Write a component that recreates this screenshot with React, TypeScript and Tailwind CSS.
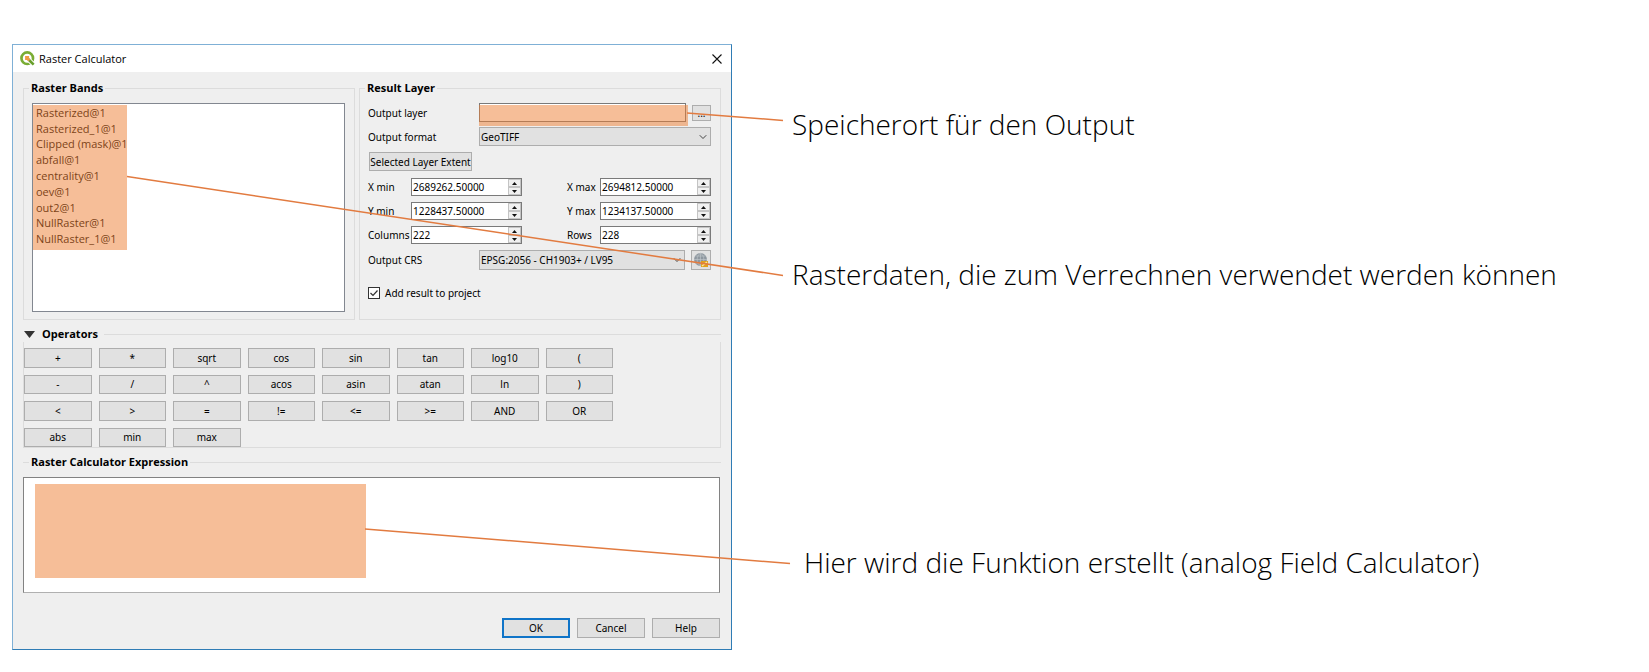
import { ChevronDown } from "lucide-react";
import type { ReactNode } from "react";

const bands = [
  "Rasterized@1",
  "Rasterized_1@1",
  "Clipped (mask)@1",
  "abfall@1",
  "centrality@1",
  "oev@1",
  "out2@1",
  "NullRaster@1",
  "NullRaster_1@1",
];

const operators = [
  "+", "*", "sqrt", "cos", "sin", "tan", "log10", "(",
  "-", "/", "^", "acos", "asin", "atan", "ln", ")",
  "<", ">", "=", "!=", "<=", ">=", "AND", "OR",
  "abs", "min", "max",
];

const buttonClass = "flex items-center justify-center border border-[#adadad] bg-[#e1e1e1] leading-none whitespace-nowrap";

function QgisLogo() {
  return (
    <svg viewBox="0 0 28 28" className="size-[15px]" aria-hidden="true">
      <circle cx="13.500" cy="13.500" r="10.800" fill="none" stroke="#7aad35" strokeWidth="5" />
      <path d="M17 17 L28 28" stroke="#ffffff" strokeWidth="8.500" />
      <path d="M15.500 15.500 L25.500 25.500" stroke="#68a02c" strokeWidth="5" />
      <path d="M9.500 9.500 H17 V13 L19 16 L16 19 L13 17 H9.500 Z" fill="#f09a45" />
    </svg>
  );
}

function GlobeIcon() {
  return (
    <svg viewBox="0 0 16 16" className="size-4" aria-hidden="true">
      <circle cx="7.500" cy="7.500" r="6.500" fill="#8e979f" />
      <path
        d="M1 7.500 H14 M7.500 1 V14 M2.500 4 H12.500 M2.500 11 H12.500 M7.500 1 C3 4 3 11 7.500 14 M7.500 1 C12 4 12 11 7.500 14"
        fill="none"
        stroke="#c5cacf"
        strokeWidth="0.600"
      />
      <rect x="8" y="9" width="7" height="6" fill="#e0a21c" />
      <path d="M9 14 L14 10" stroke="#fbe7a0" strokeWidth="1.500" />
    </svg>
  );
}

function Group({ title, className, children }: { title: string; className: string; children: ReactNode }) {
  return (
    <fieldset className={`min-w-0 border border-[#dcdcdc] ${className}`}>
      <legend className="ml-[5px] px-0.5 font-['Open_Sans',sans-serif] text-[11px] leading-4 font-bold">{title}</legend>
      <div className="pr-[9px] pl-2">{children}</div>
    </fieldset>
  );
}

function Spin({ id, label, value, labelClass }: { id: string; label: string; value: string; labelClass: string }) {
  return (
    <div className="flex items-center">
      <label htmlFor={id} className={labelClass}>{label}</label>
      <div className="flex h-[18px] w-[111px] border border-[#7a7a7a] bg-white">
        <input id={id} type="text" defaultValue={value} className="w-0 min-w-0 flex-1 pl-px outline-none" />
        <div className="flex w-[13px] flex-col">
          <button type="button" aria-label={`${label} +`} className="flex flex-1 items-center justify-center border border-[#c4c4c4] bg-[#f0f0f0]">
            <svg viewBox="0 0 5 3" className="h-[3px] w-[5px]"><path d="M0 3 L2.500 0 L5 3 Z" fill="#111" /></svg>
          </button>
          <button type="button" aria-label={`${label} -`} className="flex flex-1 items-center justify-center border border-[#c4c4c4] bg-[#f0f0f0]">
            <svg viewBox="0 0 5 3" className="h-[3px] w-[5px]"><path d="M0 0 L2.500 3 L5 0 Z" fill="#111" /></svg>
          </button>
        </div>
      </div>
    </div>
  );
}

function Dropdown({ id, value, className }: { id: string; value: string; className: string }) {
  return (
    <div className={`relative ${className}`}>
      <select id={id} className="size-full appearance-none border border-[#adadad] bg-[#e1e1e1] pl-px outline-none">
        <option>{value}</option>
      </select>
      <ChevronDown strokeWidth={2} className="pointer-events-none absolute top-1 right-0.5 size-3 text-[#444]" />
    </div>
  );
}

function ResultLayer() {
  return (
    <Group title="Result Layer" className="flex-1">
      <div className="mt-[7px] flex h-[19px] items-center">
        <label htmlFor="layer" className="w-[111px]">Output layer</label>
        <div className="relative h-[19px] flex-1">
          <input id="layer" type="text" className="size-full border border-[#7a7a7a] bg-white px-1 outline-none" />
          <div className="pointer-events-none absolute top-0.5 -right-0.5 -bottom-1 left-0 bg-[#ed7d31]/50" />
        </div>
        <button type="button" className="ml-1.5 flex h-4 w-[19px] items-center justify-center border border-[#adadad] bg-[#e1e1e1] leading-none">...</button>
      </div>
      <div className="mt-[5px] flex items-center">
        <label htmlFor="format" className="w-[111px]">Output format</label>
        <Dropdown id="format" value="GeoTIFF" className="h-[19px] flex-1" />
      </div>
      <button type="button" className={`${buttonClass} mt-[6px] ml-px h-[19px] w-[103px]`}>Selected Layer Extent</button>
      <div className="mt-[7px] flex justify-between">
        <div className="flex flex-col gap-1.5">
          <Spin id="xmin" label="X min" value="2689262.50000" labelClass="w-[43px]" />
          <Spin id="ymin" label="Y min" value="1228437.50000" labelClass="w-[43px]" />
          <Spin id="columns" label="Columns" value="222" labelClass="w-[43px]" />
        </div>
        <div className="flex flex-col gap-1.5">
          <Spin id="xmax" label="X max" value="2694812.50000" labelClass="w-[33px]" />
          <Spin id="ymax" label="Y max" value="1234137.50000" labelClass="w-[33px]" />
          <Spin id="rows" label="Rows" value="228" labelClass="w-[33px]" />
        </div>
      </div>
      <div className="mt-1.5 flex items-center">
        <label htmlFor="crs" className="w-[111px]">Output CRS</label>
        <Dropdown id="crs" value="EPSG:2056 - CH1903+ / LV95" className="h-5 flex-1" />
        <button type="button" aria-label="CRS" className={`${buttonClass} ml-1.5 h-5 w-5`}><GlobeIcon /></button>
      </div>
      <label className="mt-[15px] flex items-center gap-[5px]">
        <span className="relative flex size-3">
          <input type="checkbox" defaultChecked className="size-3 appearance-none border border-[#333] bg-white" />
          <svg viewBox="0 0 12 12" className="pointer-events-none absolute inset-0 size-3">
            <path d="M2.500 6 L5 8.500 L9.500 3.500" fill="none" stroke="#333" strokeWidth="1.200" />
          </svg>
        </span>
        Add result to project
      </label>
    </Group>
  );
}

function Dialog() {
  return (
    <section className="w-full max-w-[720px] shrink-0 border border-t-[#7fb0d6] border-r-[#2f7cb5] border-b-[#2f7cb5] border-l-[#7fb0d6] bg-[#efefef] text-[10px] leading-4">
      <header className="flex h-[27px] items-center bg-white pr-[9px] pl-[7px]">
        <QgisLogo />
        <h1 className="ml-1 flex-1 font-['Open_Sans',sans-serif] text-[11px] leading-4">Raster Calculator</h1>
        <button type="button" aria-label="Close">
          <svg viewBox="0 0 10 10" className="size-2.5"><path d="M0.500 0.500 L9.500 9.500 M9.500 0.500 L0.500 9.500" stroke="#111" strokeWidth="1.100" /></svg>
        </button>
      </header>
      <div className="px-2.5 pt-2 pb-[11px]">
        <div className="flex gap-1">
          <Group title="Raster Bands" className="w-[332px] pt-[7px] pb-[7px]">
            <div className="relative h-[209px] border border-[#828790] bg-white pt-px pl-[3px]">
              <ul className="grid h-[142px] grid-rows-9 font-['Open_Sans',sans-serif] text-[11px]">
                {bands.map((b) => <li key={b} className="flex items-center">{b}</li>)}
              </ul>
              <div className="pointer-events-none absolute top-px left-0 h-[145px] w-[94px] bg-[#ed7d31]/50" />
            </div>
          </Group>
          <ResultLayer />
        </div>

        <section className="mt-[6px]">
          <h2 className="flex h-4 items-center font-['Open_Sans',sans-serif] text-[11px] font-bold">
            <svg viewBox="0 0 11 7" className="ml-px h-[7px] w-[11px]"><path d="M0 0 H11 L5.500 7 Z" fill="#333" /></svg>
            <span className="mr-1.5 ml-[7px]">Operators</span>
            <span className="h-px flex-1 bg-[#dcdcdc]" />
          </h2>
          <div className="border-x border-b border-[#dcdcdc] pt-1.5">
            <div className="grid h-[99px] max-w-[589px] grid-cols-8 grid-rows-4 gap-[7px]">
              {operators.map((o) => <button key={o} type="button" className={buttonClass}>{o}</button>)}
            </div>
          </div>
        </section>

        <fieldset className="mt-[6px] border-t border-[#dcdcdc]">
          <legend className="ml-1.5 px-0.5 font-['Open_Sans',sans-serif] text-[11px] leading-4 font-bold">Raster Calculator Expression</legend>
          <div className="relative mt-[7px] mr-px h-[116px]">
            <textarea aria-label="Raster Calculator Expression" className="block size-full resize-none border border-[#828282] border-b-[#b0b0b0] bg-white p-1 outline-none" />
            <div className="pointer-events-none absolute top-[7px] left-3 h-[94px] w-[331px] bg-[#ed7d31]/50" />
          </div>
        </fieldset>

        <div className="mt-[25px] mr-px flex justify-end gap-[7px]">
          <button type="button" className="flex h-5 w-[68px] items-center justify-center border-2 border-[#0f74c8] bg-[#e1e1e1]">OK</button>
          <button type="button" className={`${buttonClass} h-5 w-[68px]`}>Cancel</button>
          <button type="button" className={`${buttonClass} h-5 w-[68px]`}>Help</button>
        </div>
      </div>
    </section>
  );
}

export default function App() {
  return (
    <main className="relative flex min-h-screen items-start bg-white pt-[44px] pb-5 pl-3 font-['Noto_Sans','Open_Sans',sans-serif] text-black">
      <Dialog />
      <div className="flex flex-col pt-[62px] pl-[60px] font-['Open_Sans',sans-serif] text-[28px] leading-9 font-light whitespace-nowrap">
        <p>Speicherort für den Output</p>
        <p className="mt-[114px]">Rasterdaten, die zum Verrechnen verwendet werden können</p>
        <p className="mt-[252px] ml-3">Hier wird die Funktion erstellt (analog Field Calculator)</p>
      </div>
      <svg className="pointer-events-none absolute top-0 left-0 h-[672px] w-[800px]" viewBox="0 0 800 672" aria-hidden="true">
        <g stroke="#e27b40" strokeWidth="1.500">
          <path d="M687 113 L783 120.500" />
          <path d="M127 176.500 L783 275.500" />
          <path d="M365 529 L790 563.500" />
        </g>
      </svg>
    </main>
  );
}
